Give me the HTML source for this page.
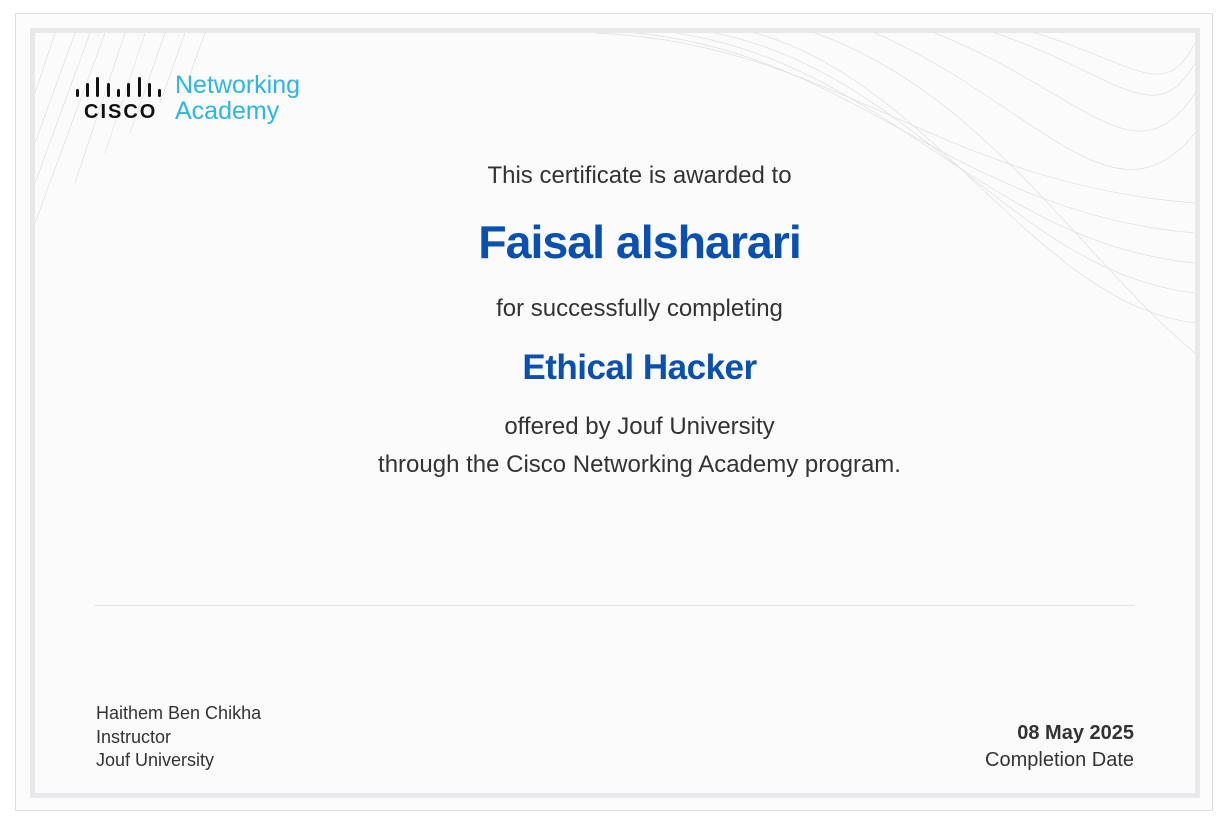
<!DOCTYPE html>
<html><head><meta charset="utf-8"><style>
html,body{margin:0;padding:0;background:#fff;width:1229px;height:830px;overflow:hidden;font-family:"Liberation Sans",Arial,sans-serif;}
.outer{position:absolute;left:15px;top:13px;width:1198px;height:798px;border:1px solid #dedede;box-sizing:border-box;background:#fcfcfc;}
.inner{position:absolute;left:30px;top:28px;width:1170px;height:770px;border:5px solid #e9e9eb;box-sizing:border-box;background:#fbfbfb;overflow:hidden;}
.t{position:absolute;left:25px;width:1229px;text-align:center;color:#333;}
</style></head><body>
<div class="outer"></div>
<div class="inner">
<svg width="1160" height="760" style="position:absolute;left:0;top:0">
<g stroke="#d8d8dc" stroke-width="0.7" fill="none" opacity="0.8">
<path d="M0 190 L70 0"/><path d="M0 150 L55 0"/><path d="M0 110 L40 0"/><path d="M20 0 L0 60"/>
<path d="M90 0 L40 150"/><path d="M110 0 L70 120"/><path d="M130 0 L95 100"/><path d="M150 0 L125 70"/><path d="M170 0 L150 55"/>
<path d="M560 0 C800 10 900 150 1160 170"/><path d="M600 0 C820 20 920 180 1160 200"/><path d="M640 0 C850 30 950 210 1160 230"/>
<path d="M680 0 C880 40 980 240 1160 260"/><path d="M720 0 C900 50 1000 270 1160 290"/><path d="M780 0 C950 60 1050 230 1160 320"/>
<path d="M840 0 C1000 70 1080 200 1160 100"/><path d="M900 0 C1050 60 1100 150 1160 60"/><path d="M960 0 C1080 40 1120 100 1160 30"/>
<path d="M1000 0 C1100 30 1130 70 1160 10"/>
</g></svg>
</div>
<svg style="position:absolute;left:74px;top:75px" width="95" height="48">
<g fill="#111">
<rect x="2" y="14" width="3" height="8" rx="1.5"/><rect x="12" y="8" width="3" height="14" rx="1.5"/><rect x="22" y="2" width="3" height="20" rx="1.5"/>
<rect x="33" y="8" width="3" height="14" rx="1.5"/><rect x="43" y="14" width="3" height="8" rx="1.5"/><rect x="53" y="8" width="3" height="14" rx="1.5"/>
<rect x="64" y="2" width="3" height="20" rx="1.5"/><rect x="74" y="8" width="3" height="14" rx="1.5"/><rect x="84" y="14" width="3" height="8" rx="1.5"/>
</g>
<text x="10" y="43" font-family="Liberation Sans" font-weight="bold" font-size="20" letter-spacing="2" fill="#111">CISCO</text>
</svg>
<div style="position:absolute;left:175px;top:72px;color:#2bb5e8;font-size:25px;line-height:26px;">Networking<br>Academy</div>
<div class="t" style="top:162px;font-size:24px;">This certificate is awarded to</div>
<div class="t" style="top:215px;font-size:46.5px;font-weight:bold;color:#0950b0;letter-spacing:-1px;">Faisal alsharari</div>
<div class="t" style="top:295px;font-size:24px;">for successfully completing</div>
<div class="t" style="top:348px;font-size:35px;font-weight:bold;color:#0950b0;letter-spacing:-0.5px;">Ethical Hacker</div>
<div class="t" style="top:413px;font-size:24px;">offered by Jouf University</div>
<div class="t" style="top:451px;font-size:24px;">through the Cisco Networking Academy program.</div>
<div style="position:absolute;left:95px;top:605px;width:1040px;height:1px;background:#e2e2e2"></div>
<div style="position:absolute;left:96px;top:702px;font-size:18px;line-height:23.5px;color:#333">Haithem Ben Chikha<br>Instructor<br>Jouf University</div>
<div style="position:absolute;right:95px;top:720px;font-size:20px;line-height:27px;color:#333;text-align:right"><b>08 May 2025</b><br>Completion Date</div>
</body></html>
